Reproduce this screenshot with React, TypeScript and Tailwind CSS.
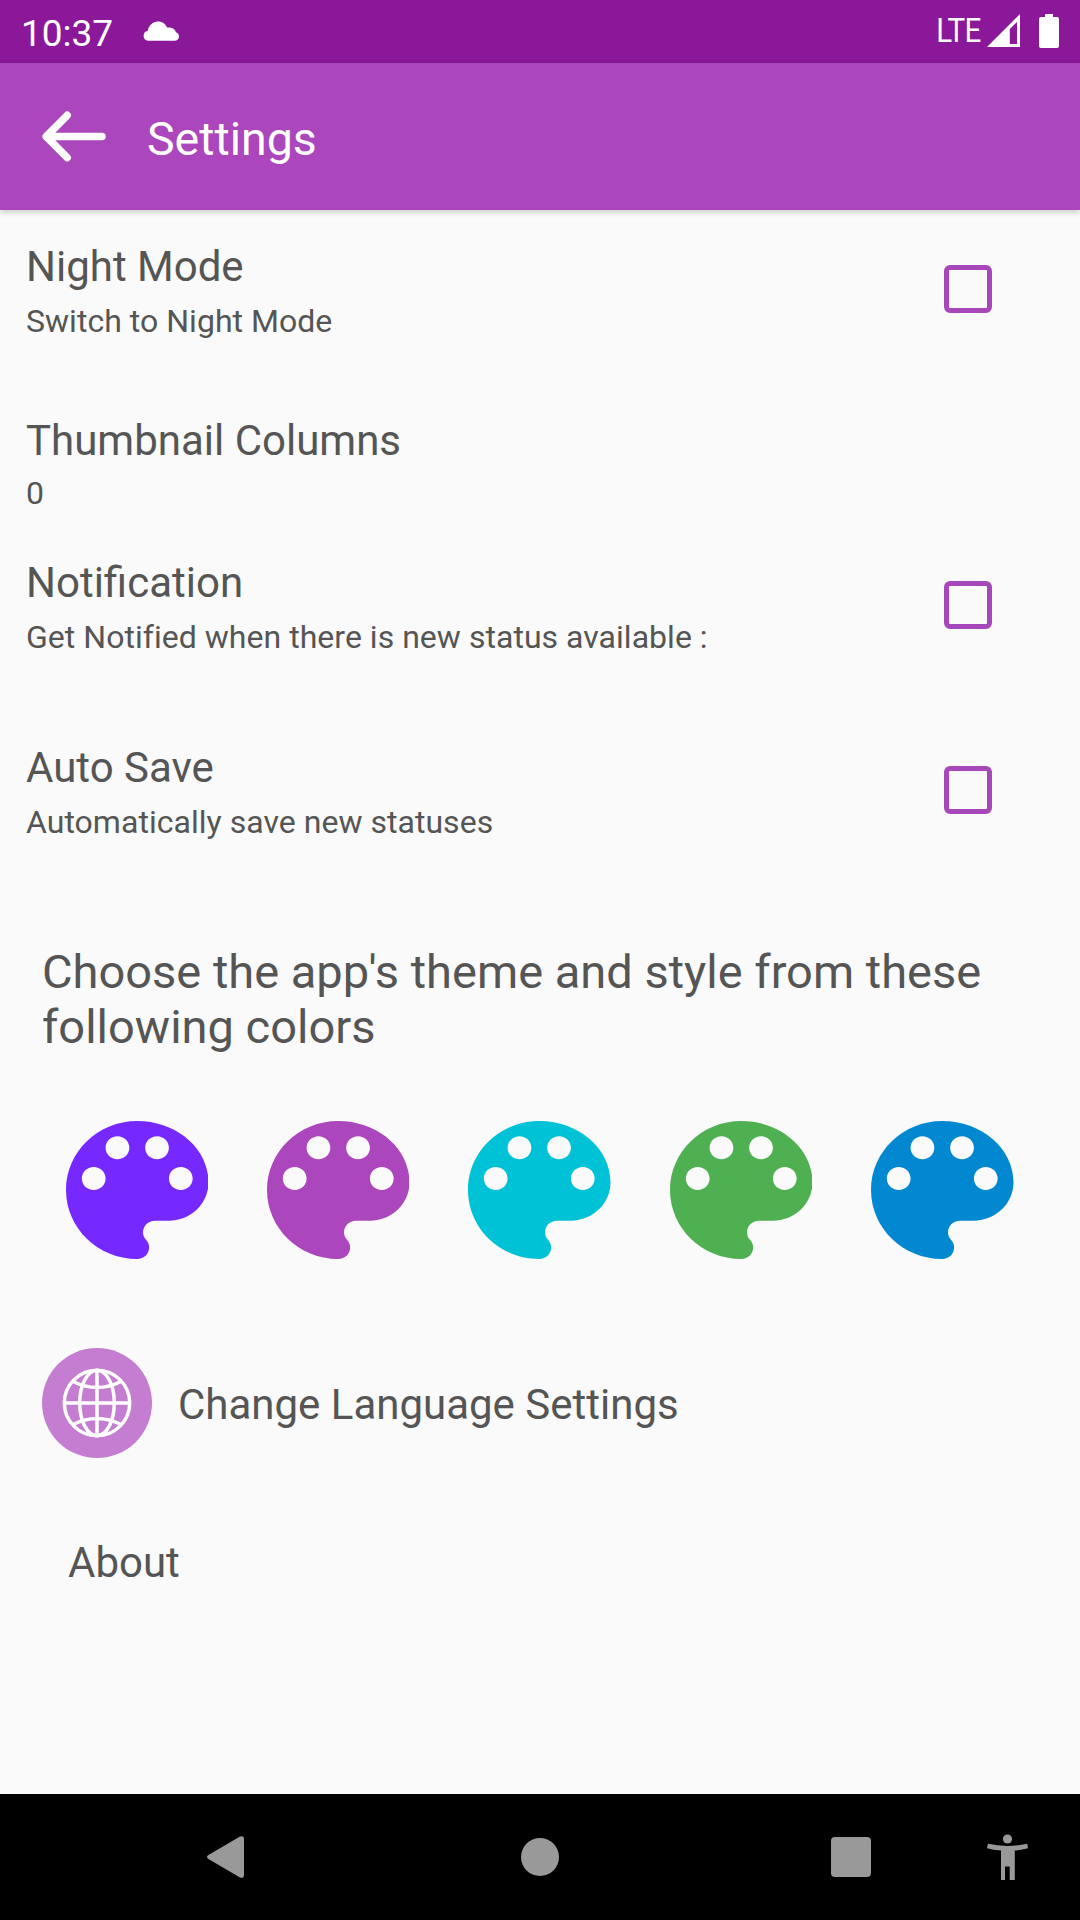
type SettingProps = {
  title: string;
  summary: string;
  className: string;
  checkbox?: boolean;
};

const themes = [
  { name: 'violet', className: 'text-[#7629ff]' },
  { name: 'purple', className: 'text-[#ab46bc]' },
  { name: 'cyan', className: 'text-[#00c2d6]' },
  { name: 'green', className: 'text-[#4eb051]' },
  { name: 'blue', className: 'text-[#0288d1]' },
];

function Setting({ title, summary, className, checkbox = true }: SettingProps) {
  return (
    <div className={`flex justify-between pl-[26px] pr-[88px] ${className}`}>
      <div>
        <div className="text-[42px] leading-[50px]">{title}</div>
        <div
          className={`text-[32px] leading-[38px] tracking-[0.03px] [font-variant-ligatures:common-ligatures] ${checkbox ? 'mt-[10px]' : 'mt-[8px]'}`}
        >
          {summary}
        </div>
      </div>
      {checkbox && (
        <button
          aria-label={title}
          className="mt-[23px] h-12 w-12 shrink-0 rounded-[6px] border-[5px] border-[#a748ba]"
        />
      )}
    </div>
  );
}

function StatusBar() {
  return (
    <div className="flex h-[63px] items-start bg-[#8a1899] text-white">
      <div className="ml-[21px] mt-[12px] w-[122px] text-[37px] leading-[44px]">10:37</div>
      <svg viewBox="0 0 36 20" className="mt-[20.5px] h-5 w-9" fill="currentColor">
        <path d="M5 19.8a4.9 4.9 0 0 1-.3-9.7C5.600 4.400 9.800.5 15.200.5c4 0 7.200 2.200 8.900 6 5-.7 8.400 1.700 8.700 4.800 1.900.5 3.200 2.200 3.200 4.200 0 2.500-1.900 4.300-4.300 4.300Z" />
      </svg>
      <div className="ml-auto mt-[12px] origin-right scale-x-[0.91] text-[32.500px] leading-[38px] tracking-[-0.8px]">
        LTE
      </div>
      <svg viewBox="0 0 33 33" className="ml-[6px] mt-[14px] h-[33px] w-[33px]" fill="currentColor">
        <path fillRule="evenodd" d="M0 33 33 0v33ZM22.800 15v15H30V8Z" />
      </svg>
      <svg viewBox="0 0 20 34" className="ml-[19px] mr-[21px] mt-[14px] h-[34px] w-5" fill="currentColor">
        <path d="M6 0h8v3h4a2 2 0 0 1 2 2v27a2 2 0 0 1-2 2H2a2 2 0 0 1-2-2V5a2 2 0 0 1 2-2h4Z" />
      </svg>
    </div>
  );
}

function Palette() {
  return (
    <svg
      viewBox="3 3 18 18"
      preserveAspectRatio="none"
      className="h-[138px] w-[142.5px]"
      fill="currentColor"
    >
      <path d="M12 3c-4.970 0-9 4.030-9 9s4.030 9 9 9c.83 0 1.500-.67 1.500-1.500 0-.39-.15-.74-.39-1.010-.23-.26-.38-.61-.38-.99 0-.83.67-1.500 1.500-1.500H16c2.760 0 5-2.240 5-5 0-4.420-4.030-8-9-8zm-5.500 9c-.83 0-1.500-.67-1.500-1.500S5.670 9 6.500 9 8 9.670 8 10.500 7.330 12 6.500 12zm3-4C8.670 8 8 7.330 8 6.500S8.670 5 9.500 5s1.500.67 1.500 1.500S10.330 8 9.500 8zm5 0c-.83 0-1.500-.67-1.500-1.500S13.670 5 14.500 5s1.500.67 1.500 1.500S15.330 8 14.500 8zm3 4c-.83 0-1.500-.67-1.500-1.500S16.670 9 17.500 9s1.500.67 1.500 1.500-.67 1.500-1.500 1.500z" />
    </svg>
  );
}

function NavigationBar() {
  return (
    <div className="flex h-[126px] items-center bg-black text-[#999]">
      <svg viewBox="0 0 37 42" className="ml-[207px] h-[42px] w-[37px]" fill="currentColor">
        <path d="M1 19.300 33 .5Q37-.8 37 3v36q0 3.800-4 2.500L1 22.700q-2-1.700 0-3.400Z" />
      </svg>
      <div className="ml-[277px] h-[38px] w-[38px] rounded-full bg-[#999]" />
      <div className="ml-[272px] h-10 w-10 rounded-[4px] bg-[#999]" />
      <svg viewBox="0 0 42 46" className="ml-[116px] h-[46px] w-[42px]" fill="currentColor">
        <circle cx="20.500" cy="5" r="4.600" />
        <path d="M.9 9.800Q20.500 14 40.200 9.800l.9 4.500q-6 1.700-13.300 2.300V46H22.700V32.500H18V46H14V16.600Q6 16 0 14.300Z" />
      </svg>
    </div>
  );
}

export default function App() {
  return (
    <div className="flex h-[1920px] w-[1080px] flex-col overflow-hidden bg-[#fafafa] font-['Roboto',sans-serif] text-[#555]">
      <StatusBar />

      {/* App bar */}
      <div className="flex h-[147px] shrink-0 bg-[#ab46bc] text-white shadow-[0_2px_6px_rgba(0,0,0,0.2)]">
        <svg
          viewBox="0 0 66 52"
          className="ml-[41px] mt-[47px] h-[52px] w-[66px]"
          fill="none"
          stroke="currentColor"
          strokeWidth="7.500"
          strokeLinecap="round"
          strokeLinejoin="round"
        >
          <path d="M26.200 5.300 5.200 26.500l21 21.200M6 26.500h55" />
        </svg>
        <h1 className="ml-[40px] mt-[49px] text-[46.5px] leading-[55px]">Settings</h1>
      </div>

      <main className="flex-1">
        <Setting title="Night Mode" summary="Switch to Night Mode" className="mt-[32px]" />
        <Setting title="Thumbnail Columns" summary="0" className="mt-[76px]" checkbox={false} />
        <Setting
          title="Notification"
          summary="Get Notified when there is new status available :"
          className="mt-[46px]"
        />
        <Setting title="Auto Save" summary="Automatically save new statuses" className="mt-[87px]" />

        {/* Theme colors */}
        <p className="ml-[42px] mt-[103px] w-[980px] text-[47px] leading-[55px]">
          Choose the app's theme and style from these following colors
        </p>
        <div className="mt-[67px] flex justify-between pl-[65.5px] pr-[66.5px]">
          {themes.map((theme) => (
            <button key={theme.name} aria-label={theme.name} className={theme.className}>
              <Palette />
            </button>
          ))}
        </div>

        {/* Language */}
        <div className="ml-[42px] mt-[89px] flex items-center">
          <div className="flex h-[110px] w-[110px] items-center justify-center rounded-full bg-[#c47dd1] text-white">
            <svg viewBox="0 0 70 70" className="h-[70px] w-[70px]" fill="none" stroke="currentColor" strokeWidth="3.500">
              <circle cx="35" cy="35" r="32.700" />
              <ellipse cx="35" cy="35" rx="17.300" ry="32.700" />
              <path d="M35 2v66M2 35h66M11 13.500q24 12 48 0M11 56.500q24-12 48 0" />
            </svg>
          </div>
          <div className="ml-[26px] pt-[4px] text-[42px] leading-[50px]">Change Language Settings</div>
        </div>

        <div className="ml-[68px] mt-[80px] text-[42px] leading-[50px]">About</div>
      </main>

      <NavigationBar />
    </div>
  );
}
